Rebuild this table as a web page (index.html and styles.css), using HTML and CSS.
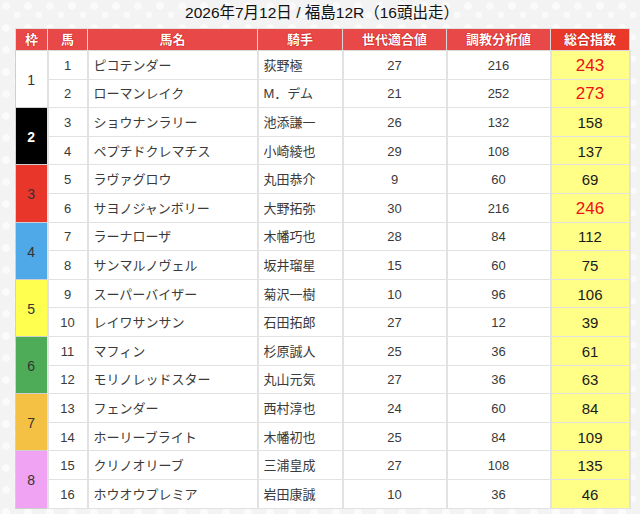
FILE: index.html
```html
<!DOCTYPE html>
<html lang="ja">
<head>
<meta charset="utf-8">
<title>福島12R</title>
<link rel="stylesheet" href="styles.css">
</head>
<body>
<div class="page">
  <h1 class="title">2026年7月12日 / 福島12R（16頭出走）</h1>
  <table class="race">
    <colgroup>
      <col class="c-waku"><col class="c-uma"><col class="c-name"><col class="c-jockey"><col class="c-sedai"><col class="c-chokyo"><col class="c-total">
    </colgroup>
    <thead>
      <tr>
        <th>枠</th><th>馬</th><th>馬名</th><th>騎手</th><th>世代適合値</th><th>調教分析値</th><th class="th-total">総合指数</th>
      </tr>
    </thead>
    <tbody>
      <tr><td rowspan="2" class="waku w1">1</td><td class="num">1</td><td class="name">ピコテンダー</td><td class="name">荻野極</td><td class="num">27</td><td class="num">216</td><td class="total hot">243</td></tr>
      <tr><td class="num">2</td><td class="name">ローマンレイク</td><td class="name">M．デム</td><td class="num">21</td><td class="num">252</td><td class="total hot">273</td></tr>
      <tr><td rowspan="2" class="waku w2">2</td><td class="num">3</td><td class="name">ショウナンラリー</td><td class="name">池添謙一</td><td class="num">26</td><td class="num">132</td><td class="total">158</td></tr>
      <tr><td class="num">4</td><td class="name">ペプチドクレマチス</td><td class="name">小崎綾也</td><td class="num">29</td><td class="num">108</td><td class="total">137</td></tr>
      <tr><td rowspan="2" class="waku w3">3</td><td class="num">5</td><td class="name">ラヴァグロウ</td><td class="name">丸田恭介</td><td class="num">9</td><td class="num">60</td><td class="total">69</td></tr>
      <tr><td class="num">6</td><td class="name">サヨノジャンボリー</td><td class="name">大野拓弥</td><td class="num">30</td><td class="num">216</td><td class="total hot">246</td></tr>
      <tr><td rowspan="2" class="waku w4">4</td><td class="num">7</td><td class="name">ラーナローザ</td><td class="name">木幡巧也</td><td class="num">28</td><td class="num">84</td><td class="total">112</td></tr>
      <tr><td class="num">8</td><td class="name">サンマルノヴェル</td><td class="name">坂井瑠星</td><td class="num">15</td><td class="num">60</td><td class="total">75</td></tr>
      <tr><td rowspan="2" class="waku w5">5</td><td class="num">9</td><td class="name">スーパーバイザー</td><td class="name">菊沢一樹</td><td class="num">10</td><td class="num">96</td><td class="total">106</td></tr>
      <tr><td class="num">10</td><td class="name">レイワサンサン</td><td class="name">石田拓郎</td><td class="num">27</td><td class="num">12</td><td class="total">39</td></tr>
      <tr><td rowspan="2" class="waku w6">6</td><td class="num">11</td><td class="name">マフィン</td><td class="name">杉原誠人</td><td class="num">25</td><td class="num">36</td><td class="total">61</td></tr>
      <tr><td class="num">12</td><td class="name">モリノレッドスター</td><td class="name">丸山元気</td><td class="num">27</td><td class="num">36</td><td class="total">63</td></tr>
      <tr><td rowspan="2" class="waku w7">7</td><td class="num">13</td><td class="name">フェンダー</td><td class="name">西村淳也</td><td class="num">24</td><td class="num">60</td><td class="total">84</td></tr>
      <tr><td class="num">14</td><td class="name">ホーリーブライト</td><td class="name">木幡初也</td><td class="num">25</td><td class="num">84</td><td class="total">109</td></tr>
      <tr><td rowspan="2" class="waku w8">8</td><td class="num">15</td><td class="name">クリノオリーブ</td><td class="name">三浦皇成</td><td class="num">27</td><td class="num">108</td><td class="total">135</td></tr>
      <tr><td class="num">16</td><td class="name">ホウオウプレミア</td><td class="name">岩田康誠</td><td class="num">10</td><td class="num">36</td><td class="total">46</td></tr>
    </tbody>
  </table>
</div>
</body>
</html>
```

FILE: styles.css
```css
html, body {
  margin: 0;
  padding: 0;
}
body {
  background-color: #f3f3f3;
  background-image:
    radial-gradient(circle at 6px 6px, #fbfbfb 3.5px, transparent 4px),
    radial-gradient(circle at 17px 15px, #fafafa 3px, transparent 3.5px);
  background-size: 22px 22px, 22px 22px;
  font-family: "Liberation Sans", "Noto Sans CJK JP", sans-serif;
  color: #333;
}
.page {
  padding: 3px 11px 0 15px;
}
.title {
  margin: 0 0 5px 0;
  text-align: center;
  font-size: 15.5px;
  font-weight: normal;
  line-height: 20px;
  color: #111;
}
.race {
  width: 614px;
  border-collapse: collapse;
  table-layout: fixed;
  background: #fff;
}
.c-waku { width: 32px; }
.c-uma { width: 40px; }
.c-name { width: 170px; }
.c-jockey { width: 85px; }
.c-sedai { width: 104px; }
.c-chokyo { width: 104px; }
.c-total { width: 79px; }

.race th {
  background: #e94849;
  color: #fff;
  font-size: 13px;
  font-weight: bold;
  height: 21px;
  padding: 0;
  border: 1px solid #d9d9d9;
  border-top-color: #e2e2e2;
  text-shadow: 0 0 1px #b00, 0 0 1px #b00;
  line-height: 21px;
}
.race th.th-total {
  background: #e8392b;
}
.race td {
  height: 25.6px;
  padding: 2px 0 0 0;
  border: 1px solid #e2e2e2;
  border-left-width: 2px;
  border-right-width: 2px;
  font-size: 13px;
  line-height: 18px;
  color: #3a3a3a;
}
.race td.num {
  text-align: center;
}
.race td.name {
  padding-left: 5px;
  text-align: left;
  white-space: nowrap;
}
.race td.total {
  background: #ffff88;
  text-align: center;
  font-size: 15px;
  color: #1a1a1a;
}
.race td.total.hot {
  color: #ee1111;
  font-size: 17px;
}
.race td.waku {
  text-align: center;
  font-size: 14px;
  color: #333;
  border: 1px solid #cfcfcf;
}
.w1 { background: #ffffff; }
.w2 { background: #000000; color: #fff !important; font-weight: bold; }
.w3 { background: #e8362b; }
.w4 { background: #4fa8e8; }
.w5 { background: #ffff4f; }
.w6 { background: #4eab58; }
.w7 { background: #f4c144; }
.w8 { background: #f0a3f2; }
```
